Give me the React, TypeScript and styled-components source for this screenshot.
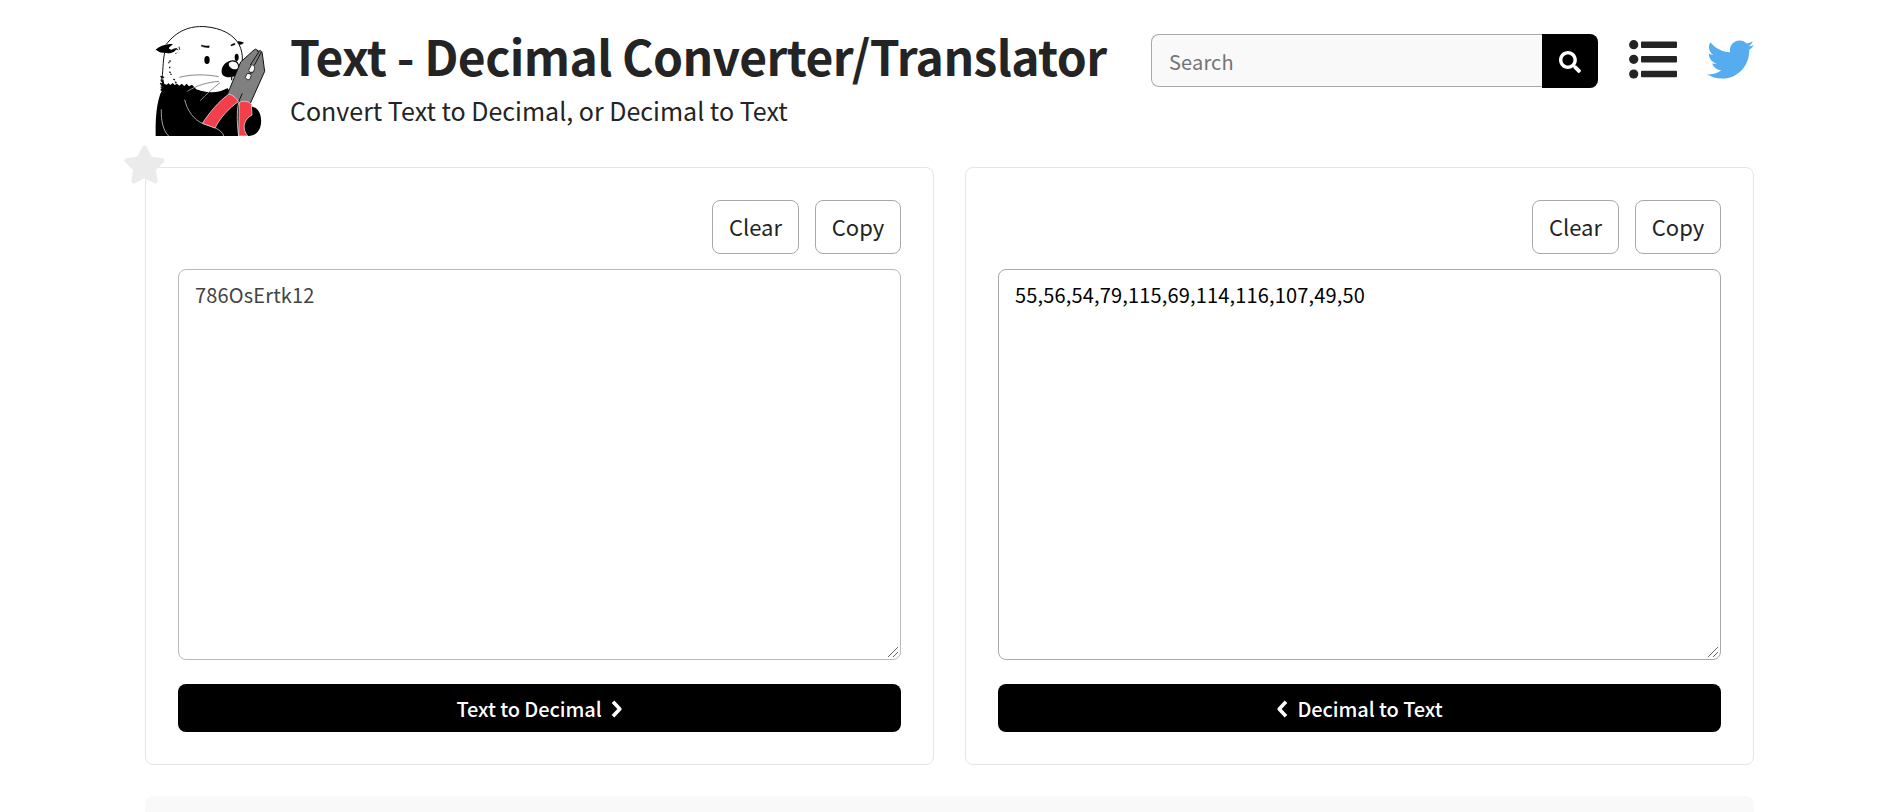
import React from "react";
import styled, { createGlobalStyle } from "styled-components";
import { FaSearch, FaTwitter, FaStar } from "react-icons/fa";

const GlobalStyle = createGlobalStyle`
  * { box-sizing: border-box; }
  body {
    margin: 0;
    height: 812px;
    overflow: hidden;
    background: #fff;
    color: #242424;
    font-family: "Noto Sans CJK SC", "Noto Sans", sans-serif;
    font-size: 20px;
  }
  button, input, textarea { font-family: inherit; font-size: 20px; margin: 0; }
`;

const Page = styled.div`
  width: 1609px;
  height: 812px;
  margin-left: 145px;
  overflow: visible;
`;

const Header = styled.header`
  display: flex;
  align-items: flex-start;
  height: 167px;
  padding: 25px 0 0 10px;
`;

const Logo = styled.svg`
  flex-shrink: 0;
`;

const Titles = styled.div`
  margin-left: 23px;
  width: 860px;
  white-space: nowrap;
`;

const Title = styled.h1`
  margin: 0;
  font-size: 48px;
  line-height: 60px;
  font-weight: 700;
  letter-spacing: -0.6px;
`;

const Subtitle = styled.p`
  margin: 5px 0 0;
  font-size: 25px;
  line-height: 40px;
`;

const Search = styled.form`
  display: flex;
  align-items: flex-start;
  margin-top: 9px;
  margin-left: 1px;
  width: 447px;
  flex-shrink: 0;
`;

const SearchInput = styled.input`
  flex: 1;
  min-width: 0;
  height: 53px;
  padding: 1px 17px 0;
  border: 1px solid #a9a9a9;
  border-right: 0;
  border-radius: 8px 0 0 8px;
  background: #f9f9f9;
  letter-spacing: 0.15px;
  outline: none;
  &::placeholder { color: #757575; opacity: 1; }
`;

const SearchButton = styled.button`
  display: flex;
  align-items: center;
  justify-content: center;
  width: 56px;
  height: 54px;
  padding: 2px 0 0;
  border: 0;
  border-radius: 0 8px 8px 0;
  background: #000;
  color: #fff;
`;

const HeaderLink = styled.a<{ $color: string; $gap: number }>`
  display: flex;
  flex-shrink: 0;
  margin: 11px 0 0 ${(p) => p.$gap}px;
  color: ${(p) => p.$color};
`;

const Panels = styled.main`
  display: grid;
  grid-template-columns: 1fr 1fr;
  gap: 31px;
`;

const Panel = styled.section`
  position: relative;
  display: flex;
  flex-direction: column;
  height: 598px;
  padding: 32px;
  border: 1px solid #e5e5e5;
  border-radius: 8px;
`;

const Favorite = styled.span`
  position: absolute;
  top: -25px;
  left: -23px;
  display: flex;
  color: #ebebeb;
`;

const Actions = styled.div`
  display: flex;
  justify-content: flex-end;
  gap: 16px;
  margin-bottom: 15px;
`;

const ActionButton = styled.button<{ $width: number }>`
  width: ${(p) => p.$width}px;
  height: 54px;
  padding: 0 0 2px;
  border: 1px solid #a9a9a9;
  border-radius: 8px;
  background: #fff;
  color: #242424;
  && { font-size: 22px; }
`;

const TextField = styled.div`
  position: relative;
  height: 391px;
`;

const TextBox = styled.textarea<{ $muted?: boolean }>`
  display: block;
  width: 100%;
  height: 100%;
  padding: 10px 16px;
  border: 1px solid ${(p) => (p.$muted ? "#bababa" : "#a9a9a9")};
  border-radius: 8px;
  background: #fff;
  color: ${(p) => (p.$muted ? "#444" : "#000")};
  line-height: 30px;
  letter-spacing: 0.16px;
  resize: none;
  outline: none;
`;

const Grip = styled.svg`
  position: absolute;
  right: 3px;
  bottom: 3px;
`;

const ConvertButton = styled.button`
  display: flex;
  align-items: center;
  justify-content: center;
  gap: 9px;
  height: 48px;
  margin-top: 24px;
  padding: 0;
  border: 0;
  border-radius: 8px;
  background: #000;
  color: #fff;
  font-weight: 500;
  letter-spacing: -0.07px;
`;

const ChevronSvg = styled.svg`
  margin-top: 2px;
`;

const Footer = styled.section`
  height: 16px;
  margin-top: 31px;
  border-radius: 8px 8px 0 0;
  background: #f9f9f9;
`;

const ListIcon = () => (
  <svg width="48" height="48" viewBox="0 0 48 48" fill="currentColor">
    {[8.7, 23.3, 38].map((y) => (
      <g key={y}>
        <circle cx="4.7" cy={y} r="4.6" />
        <rect x="12" y={y - 3.3} width="36" height="6.6" rx="1" />
      </g>
    ))}
  </svg>
);

const Chevron = ({ d }: { d: string }) => (
  <ChevronSvg width="12" height="18" viewBox="0 0 12 18" fill="none" stroke="currentColor" strokeWidth="3.6">
    <path d={d} strokeLinejoin="round" />
  </ChevronSvg>
);

const ResizeGrip = () => (
  <Grip width="10" height="10" viewBox="0 0 10 10" stroke="#666" strokeWidth="1">
    <path d="M0 10L10 0M5 10L10 5" />
  </Grip>
);

const OtterLogo = () => (
  <Logo width="112" height="111" viewBox="135 45 336 333" fill="none">
    <path d="M157 224C152 195 162 160 160 132C169 99 205 60 250 51C300 43 350 61 375 89C391 105 399 132 396 160L356 251C330 250 282 247 262 238Z" fill="#fff" />
    <path d="M156 206C160 170 159 146 165 124M168 104C200 62 240 47 285 50C334 54 371 73 388 105C395 119 398 137 397 154" stroke="#111" strokeWidth="3" />
    <path d="M137 119C151 107 169 102 189 102C178 112 170 116 185 119L202 113C195 128 179 132 163 128C151 130 145 124 137 119Z" fill="#000" />
    <path d="M187 119C191 116 200 116 205 120M207 110L209 119M200 128L196 132" stroke="#222" strokeWidth="3" />
    <path d="M382 94Q393 92 402 98Q396 103 389 105Z" fill="#000" />
    <path d="M180 151v5M175 157l3 2M179 170v5M178 185l4 3M183 191v4M190 207l5 3M196 215l3 5" stroke="#111" strokeWidth="4" />
    <path d="M274 105Q287 109 298 107L297 113Q284 113 274 109ZM362 105L374 99L375 104L364 108Z" fill="#000" stroke="#000" />
    <ellipse cx="291" cy="150" rx="8" ry="12" fill="#000" />
    <ellipse cx="380" cy="142" rx="6" ry="11" fill="#000" />
    <path d="M151 224L157 219L151 212L160 208L163 222L171 224L175 219L181 225L188 219L194 225L201 221L208 227L215 221L223 228L230 221L237 229L246 224L258 237C283 246 327 249 352 234L383 274L408 290H428C452 296 459 332 449 356C440 374 429 378 407 378H137C136 322 140 283 151 251L156 242L151 238L158 232Z" fill="#000" />
    <path d="M258 237C283 249 327 251 352 234L364 212L350 205L262 222Z" fill="#fff" />
    <path d="M151 199L162 202L153 204M152 209L159 211M150 220L162 224M152 231L162 233M152 240L160 243" stroke="#111" strokeWidth="4" />
    <path d="M335 180C337 164 353 151 370 151C386 151 391 169 386 186C379 200 362 205 347 200C337 197 334 190 335 180Z" fill="#000" />
    <path d="M358 158C371 149 387 160 384 173C380 180 370 179 362 173C356 168 355 163 358 158Z" fill="#fff" />
    <path d="M365 199V211" stroke="#222" strokeWidth="4" />
    <path d="M208 202C246 192 289 193 326 200M232 244C261 226 291 217 327 214M271 272C289 252 309 235 330 218" stroke="#888" strokeWidth="3" />
    <path d="M154 298C153 331 159 362 176 378M224 269C232 303 252 329 277 340C298 347 337 357 341 378" stroke="#c0c0c0" strokeWidth="2.5" />
    <path d="M353 251L392 156L433 119C438 115 443 120 444 124C454 119 456 124 457 132L464 184L421 280L386 275Z" fill="#808080" stroke="#111" strokeWidth="3" />
    <path d="M441 120L446 127L421 165M454 126L433 166M386 275L397 250" stroke="#111" strokeWidth="3" />
    <path d="M424 165Q433 163 434 175L430 187Q418 190 416 181ZM411 191Q419 188 424 195L419 209Q410 213 406 202Z" fill="#fff" stroke="#333" strokeWidth="3" />
    <path d="M416 191L428 187" stroke="#333" strokeWidth="5" />
    <path d="M277 340C300 306 324 276 357 252C367 255 379 263 385 275C357 294 330 324 315 354Z" fill="#f43e49" stroke="#d8d8d8" strokeWidth="2.5" />
    <path d="M386 378L388 277C402 271 418 274 424 283L426 315C406 325 395 348 408 371L413 378Z" fill="#f43e49" stroke="#d8d8d8" strokeWidth="2.5" />
    <path d="M386 277C379 310 382 348 386 378" stroke="#ddd" strokeWidth="2.5" />
  </Logo>
);

export default function App() {
  return (
    <>
      <GlobalStyle />
      <Page>
        <Header>
          <OtterLogo />
          <Titles>
            <Title>Text - Decimal Converter/Translator</Title>
            <Subtitle>Convert Text to Decimal, or Decimal to Text</Subtitle>
          </Titles>
          <Search onSubmit={(e) => e.preventDefault()}>
            <SearchInput placeholder="Search" />
            <SearchButton aria-label="Search"><FaSearch size={22} /></SearchButton>
          </Search>
          <HeaderLink $color="#242424" $gap={31}><ListIcon /></HeaderLink>
          <HeaderLink $color="#55acee" $gap={30}><FaTwitter size={47} /></HeaderLink>
        </Header>
        <Panels>
          <Panel>
            <Favorite><FaStar size={43} /></Favorite>
            <Actions>
              <ActionButton $width={87}>Clear</ActionButton>
              <ActionButton $width={86}>Copy</ActionButton>
            </Actions>
            <TextField>
              <TextBox $muted spellCheck={false} defaultValue="786OsErtk12" />
              <ResizeGrip />
            </TextField>
            <ConvertButton>Text to Decimal <Chevron d="M2 1.8L8.8 9L2 16.2" /></ConvertButton>
          </Panel>
          <Panel>
            <Actions>
              <ActionButton $width={87}>Clear</ActionButton>
              <ActionButton $width={86}>Copy</ActionButton>
            </Actions>
            <TextField>
              <TextBox spellCheck={false} defaultValue="55,56,54,79,115,69,114,116,107,49,50" />
              <ResizeGrip />
            </TextField>
            <ConvertButton><Chevron d="M10 1.8L3.2 9L10 16.2" /> Decimal to Text</ConvertButton>
          </Panel>
        </Panels>
        <Footer />
      </Page>
    </>
  );
}
